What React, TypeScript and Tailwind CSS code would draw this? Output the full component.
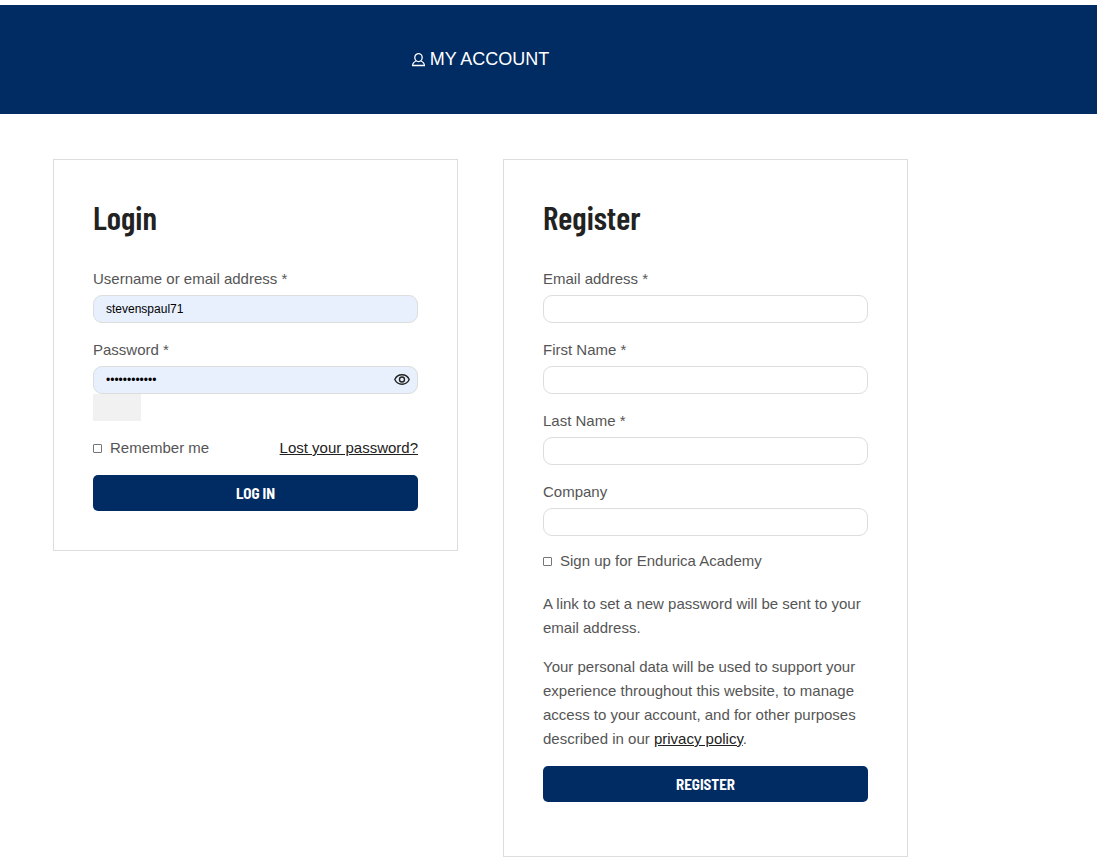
import { useId, useState, type ReactNode } from "react";

type FieldProps = {
  label: string;
  type?: string;
  defaultValue?: string;
  filled?: boolean;
  children?: ReactNode;
};

function UserIcon() {
  return (
    <svg className="h-[14px] w-[13px]" viewBox="0 0 13 14" fill="none" stroke="currentColor" strokeWidth="1.3" aria-hidden="true">
      <ellipse cx="6.5" cy="4.6" rx="3.7" ry="4" />
      <path d="M4.3 8C2.2 8.6.8 9.8.6 12.5h11.8c-.2-2.7-1.6-3.9-3.7-4.5" />
    </svg>
  );
}

function EyeIcon() {
  return (
    <svg className="h-[11px] w-[16px]" viewBox="0 0 16 11" fill="none" stroke="currentColor" strokeWidth="1.4" aria-hidden="true">
      <path d="M.8 5.5Q3 .8 8 .8t7.2 4.7Q13 10.2 8 10.2T.8 5.500Z" />
      <circle cx="8" cy="5.5" r="2.5" />
    </svg>
  );
}

function Field({ label, type = "text", defaultValue, filled = false, children }: FieldProps) {
  const id = useId();

  return (
    <div className="flex flex-col gap-1">
      <label htmlFor={id}>{label}</label>
      <div className="relative flex">
        <input
          id={id}
          type={type}
          defaultValue={defaultValue}
          className={`h-7 w-full rounded-[9px] border border-[#dddddd] px-3 text-xs text-black ${filled ? "bg-[#e8f0fe]" : "bg-white"}`}
        />
        {children}
      </div>
    </div>
  );
}

function Checkbox({ label }: { label: string }) {
  return (
    <label className="flex items-center gap-2">
      <input
        type="checkbox"
        className="size-[9px] appearance-none rounded-[1px] border border-[#767676] bg-white checked:bg-[#002b63]"
      />
      {label}
    </label>
  );
}

function SubmitButton({ children }: { children: ReactNode }) {
  return (
    <button
      type="submit"
      className="h-9 w-full rounded-[5px] bg-[#002b63] font-['Barlow_Semi_Condensed','Barlow','Roboto',sans-serif] text-[15px] font-bold text-white uppercase"
    >
      {children}
    </button>
  );
}

function Card({ title, children }: { title: string; children: ReactNode }) {
  return (
    <section className="border border-[#dddddd] p-[39px]">
      <h2 className="mb-8 font-['Barlow_Condensed','Liberation_Sans_Narrow',sans-serif] text-[33px] leading-9 font-semibold text-[#222222]">
        {title}
      </h2>
      {children}
    </section>
  );
}

function LoginForm() {
  const [visible, setVisible] = useState(false);

  return (
    <Card title="Login">
      <form className="flex flex-col gap-[15px]" onSubmit={(e) => e.preventDefault()}>
        <Field label="Username or email address *" defaultValue="stevenspaul71" filled />
        <div>
          <Field label="Password *" type={visible ? "text" : "password"} defaultValue="password1234" filled>
            <button
              type="button"
              aria-label="Show password"
              className="absolute inset-y-0 right-2 flex items-center pb-0.5 text-[#222222]"
              onClick={() => setVisible(!visible)}
            >
              <EyeIcon />
            </button>
          </Field>
          <div className="h-[27px] w-12 bg-[#f1f1f1]" />
        </div>
        <div className="flex flex-wrap items-center justify-between">
          <Checkbox label="Remember me" />
          <a href="#lost-password" className="text-[#222222] underline">
            Lost your password?
          </a>
        </div>
        <SubmitButton>Log in</SubmitButton>
      </form>
    </Card>
  );
}

function RegisterForm() {
  return (
    <Card title="Register">
      <form className="mb-[15px]" onSubmit={(e) => e.preventDefault()}>
        <div className="mb-[13px] flex flex-col gap-[15px]">
          <Field label="Email address *" type="email" />
          <Field label="First Name *" />
          <Field label="Last Name *" />
          <Field label="Company" />
        </div>
        <Checkbox label="Sign up for Endurica Academy" />
        <div className="mt-[19px] flex flex-col gap-[15px]">
          <p>A link to set a new password will be sent to your email address.</p>
          <p>
            Your personal data will be used to support your experience throughout this website, to manage access to
            your account, and for other purposes described in our{" "}
            <a href="#privacy" className="text-[#222222] underline">
              privacy policy
            </a>
            .
          </p>
          <SubmitButton>Register</SubmitButton>
        </div>
      </form>
    </Card>
  );
}

export default function App() {
  return (
    <div className="min-h-screen bg-white pt-[5px] font-['Liberation_Sans',Arial,sans-serif] text-[15px] leading-6 text-[#555555]">
      <header className="bg-[#002b63] py-[42px] text-white">
        <h1 className="flex max-w-[961px] items-center justify-center gap-[5px] text-lg leading-[25px]">
          <UserIcon />
          MY ACCOUNT
        </h1>
      </header>
      <main className="grid max-w-[961px] items-start gap-[45px] px-[53px] pt-[45px] md:grid-cols-2">
        <LoginForm />
        <RegisterForm />
      </main>
    </div>
  );
}
